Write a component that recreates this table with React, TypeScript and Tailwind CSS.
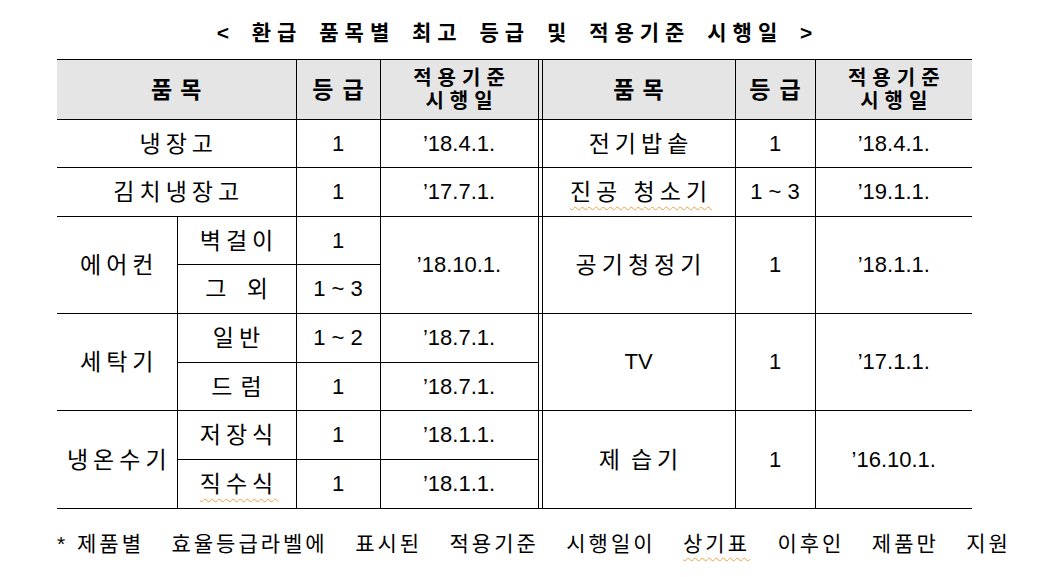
const KO = "text-[23px] tracking-[5px] pl-[5px]";
const NUM = "text-[22px]";
const RANGE = "text-[22px] tracking-[6px] pl-[6px]";
const CELL = "border border-black p-0";
const SQUIGGLE = "underline decoration-wavy decoration-[#f0a040] decoration-1 underline-offset-[6px]";

// footnote words, spread over the full line width like the original
const NOTE = ["* 제품별", "효율등급라벨에", "표시된", "적용기준", "시행일이", "상기표", "이후인", "제품만", "지원"];

// narrow column between the two halves, its two borders make the double line
function Gap({ rows = 1, head = false }: { rows?: number; head?: boolean }) {
  return <td rowSpan={rows} className={`border-x border-y border-black p-0 ${head ? "bg-[#e5e5e5]" : ""}`} />;
}

function HeadDate({ last = false }: { last?: boolean }) {
  return (
    <th className={`${CELL} text-[20px] leading-[22.5px] tracking-[6px] pl-[6px] ${last ? "border-r-0" : ""}`}>
      적용기준
      <br />
      시행일
    </th>
  );
}

export default function App() {
  return (
    <div className="min-h-screen bg-white text-black font-['Liberation_Sans','Noto_Sans_CJK_KR',sans-serif]">
      <div className="ml-[57px] w-[915px] pt-[19px]">
        <h1 className="pl-[6px] text-center text-[21px] font-bold leading-[28px] tracking-[6px] [word-spacing:5px]">
          &lt; 환급 품목별 최고 등급 및 적용기준 시행일 &gt;
        </h1>

        <table className="mt-[12px] w-[915px] table-fixed border-collapse text-center leading-[24px]">
          <colgroup>
            <col className="w-[120px]" />
            <col className="w-[119px]" />
            <col className="w-[84px]" />
            <col className="w-[158px]" />
            <col className="w-[4px]" />
            <col className="w-[193px]" />
            <col className="w-[80px]" />
            <col className="w-[157px]" />
          </colgroup>
          <thead>
            <tr className="h-[60px] bg-[#e5e5e5] text-[23px] font-bold leading-[24px]">
              <th colSpan={2} className={`${CELL} border-l-0 tracking-[8px] pl-[8px]`}>품목</th>
              <th className={`${CELL} tracking-[9px] pl-[9px]`}>등급</th>
              <HeadDate />
              <Gap head />
              <th className={`${CELL} tracking-[8px] pl-[8px]`}>품목</th>
              <th className={`${CELL} tracking-[9px] pl-[9px]`}>등급</th>
              <HeadDate last />
            </tr>
          </thead>
          <tbody>
            <tr className="h-[48px]">
              <td colSpan={2} className={`${CELL} ${KO} border-l-0`}>냉장고</td>
              <td className={`${CELL} ${NUM}`}>1</td>
              <td className={`${CELL} ${NUM}`}>’18.4.1.</td>
              <Gap />
              <td className={`${CELL} ${KO}`}>전기밥솥</td>
              <td className={`${CELL} ${NUM}`}>1</td>
              <td className={`${CELL} ${NUM} border-r-0`}>’18.4.1.</td>
            </tr>
            <tr className="h-[49px]">
              <td colSpan={2} className={`${CELL} ${KO} border-l-0`}>김치냉장고</td>
              <td className={`${CELL} ${NUM}`}>1</td>
              <td className={`${CELL} ${NUM}`}>’17.7.1.</td>
              <Gap />
              <td className={`${CELL} ${KO}`}>
                <span className={SQUIGGLE}>진공 청소기</span>
              </td>
              <td className={`${CELL} ${RANGE}`}>1~3</td>
              <td className={`${CELL} ${NUM} border-r-0`}>’19.1.1.</td>
            </tr>

            {/* 에어컨 */}
            <tr className="h-[48px]">
              <td rowSpan={2} className={`${CELL} ${KO} border-l-0`}>에어컨</td>
              <td className={`${CELL} ${KO}`}>벽걸이</td>
              <td className={`${CELL} ${NUM}`}>1</td>
              <td rowSpan={2} className={`${CELL} ${NUM}`}>’18.10.1.</td>
              <Gap rows={2} />
              <td rowSpan={2} className={`${CELL} ${KO}`}>공기청정기</td>
              <td rowSpan={2} className={`${CELL} ${NUM}`}>1</td>
              <td rowSpan={2} className={`${CELL} ${NUM} border-r-0`}>’18.1.1.</td>
            </tr>
            <tr className="h-[49px]">
              <td className={`${CELL} ${KO} [word-spacing:4px]`}>그 외</td>
              <td className={`${CELL} ${RANGE}`}>1~3</td>
            </tr>

            {/* 세탁기 */}
            <tr className="h-[49px]">
              <td rowSpan={2} className={`${CELL} ${KO} border-l-0`}>세탁기</td>
              <td className={`${CELL} ${KO}`}>일반</td>
              <td className={`${CELL} ${RANGE}`}>1~2</td>
              <td className={`${CELL} ${NUM}`}>’18.7.1.</td>
              <Gap rows={2} />
              <td rowSpan={2} className={`${CELL} ${NUM}`}>TV</td>
              <td rowSpan={2} className={`${CELL} ${NUM}`}>1</td>
              <td rowSpan={2} className={`${CELL} ${NUM} border-r-0`}>’17.1.1.</td>
            </tr>
            <tr className="h-[48px]">
              <td className={`${CELL} text-[23px] tracking-[8px] pl-[8px]`}>드럼</td>
              <td className={`${CELL} ${NUM}`}>1</td>
              <td className={`${CELL} ${NUM}`}>’18.7.1.</td>
            </tr>

            {/* 냉온수기 */}
            <tr className="h-[49px]">
              <td rowSpan={2} className={`${CELL} ${KO} border-l-0`}>냉온수기</td>
              <td className={`${CELL} ${KO}`}>저장식</td>
              <td className={`${CELL} ${NUM}`}>1</td>
              <td className={`${CELL} ${NUM}`}>’18.1.1.</td>
              <Gap rows={2} />
              <td rowSpan={2} className={`${CELL} ${KO}`}>
                <span className="mr-[6px]">제</span>습기
              </td>
              <td rowSpan={2} className={`${CELL} ${NUM}`}>1</td>
              <td rowSpan={2} className={`${CELL} ${NUM} border-r-0`}>’16.10.1.</td>
            </tr>
            <tr className="h-[49px]">
              <td className={`${CELL} ${KO}`}>
                <span className={SQUIGGLE}>직수식</span>
              </td>
              <td className={`${CELL} ${NUM}`}>1</td>
              <td className={`${CELL} ${NUM}`}>’18.1.1.</td>
            </tr>
          </tbody>
        </table>
      </div>

      <p className="ml-[57px] mt-[21px] flex w-[954px] justify-between whitespace-nowrap text-[21px] leading-[28px] tracking-[3px]">
        {NOTE.map((w) => (
          <span key={w} className={w === "상기표" ? SQUIGGLE : ""}>
            {w}{" "}
          </span>
        ))}
      </p>
    </div>
  );
}
